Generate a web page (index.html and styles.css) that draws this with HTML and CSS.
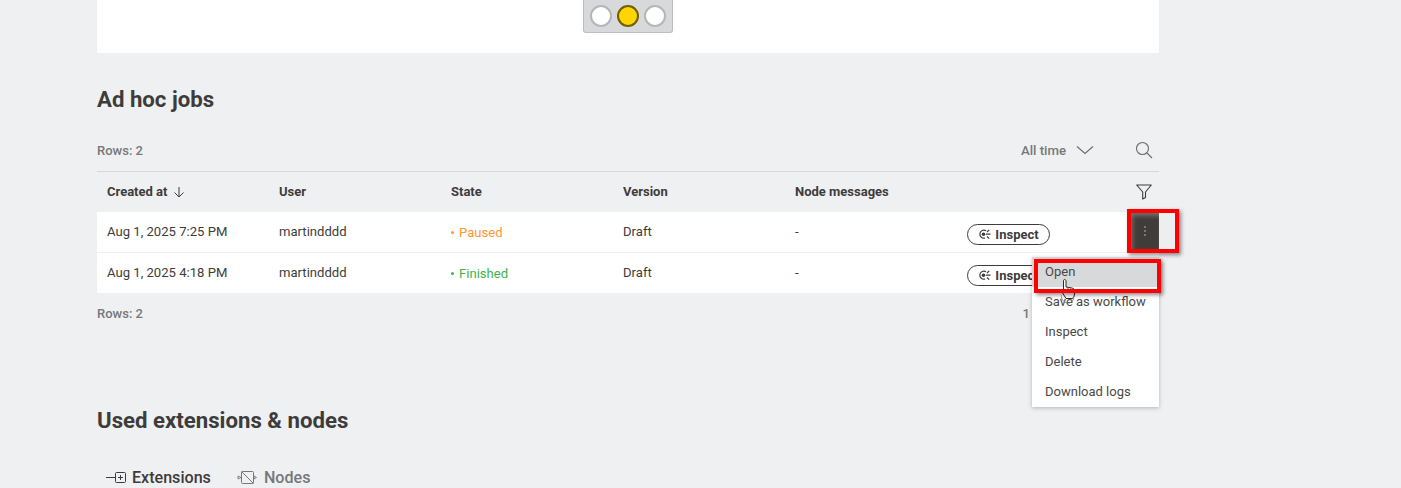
FILE: index.html
```html
<!DOCTYPE html>
<html lang="en">
<head>
<meta charset="utf-8">
<title>Ad hoc jobs</title>
<link rel="stylesheet" href="styles.css">
</head>
<body>
<main class="page">
  <section class="top-card">
    <div class="traffic">
      <span class="light"></span>
      <span class="light on"></span>
      <span class="light"></span>
    </div>
  </section>

  <h2 class="title jobs-title">Ad hoc jobs</h2>

  <div class="toolbar">
    <span class="rows">Rows: 2</span>
    <div class="tools">
      <span class="range">All time</span>
      <svg class="chev" width="18" height="10" viewBox="0 0 18 10"><path d="M1 1.500 9 8.500l8-7" fill="none" stroke="#6a6c6e" stroke-width="1.100"/></svg>
      <svg class="search" width="18" height="18" viewBox="0 0 18 18"><circle cx="7.500" cy="7.500" r="6" fill="none" stroke="#6a6c6e" stroke-width="1.100"/><path d="m12 12 5 5" stroke="#6a6c6e" stroke-width="1.100"/></svg>
    </div>
  </div>

  <div class="table">
    <div class="row head">
      <div class="cell">Created at
        <svg class="sort" width="12" height="12" viewBox="0 0 12 12"><path d="M6 1v10M1.500 6.500 6 11l4.500-4.500" fill="none" stroke="#3e3c3b" stroke-width="1"/></svg>
      </div>
      <div class="cell">User</div>
      <div class="cell">State</div>
      <div class="cell">Version</div>
      <div class="cell">Node messages</div>
      <div class="cell"></div>
      <div class="cell-end">
        <svg width="16" height="16" viewBox="0 0 16 16"><path d="M.7 1h14.600L9.500 8v5.500l-2.800 1.500V8z" fill="none" stroke="#3e3c3b" stroke-width="1.100" stroke-linejoin="round"/></svg>
      </div>
    </div>
    <div class="row body">
      <div class="cell">Aug 1, 2025 7:25 PM</div>
      <div class="cell">martindddd</div>
      <div class="cell state paused"><i class="dot"></i>Paused</div>
      <div class="cell">Draft</div>
      <div class="cell">-</div>
      <div class="cell"><button class="inspect">
        <svg width="13" height="13" viewBox="0 0 13 13"><path d="M8 2.800A4 4 0 1 0 7 10M8 6.200h4.500M9 4l2.200-2.200M9 8.500l2.200 2.200" fill="none" stroke="#3e3c3b" stroke-width="1.200"/><circle cx="5.500" cy="6.200" r="1.800" fill="#3e3c3b"/></svg>
        Inspect</button></div>
      <div class="cell-end"><span class="kebab"><i></i><i></i><i></i></span></div>
    </div>
    <div class="row body">
      <div class="cell">Aug 1, 2025 4:18 PM</div>
      <div class="cell">martindddd</div>
      <div class="cell state finished"><i class="dot"></i>Finished</div>
      <div class="cell">Draft</div>
      <div class="cell">-</div>
      <div class="cell"><button class="inspect">
        <svg width="13" height="13" viewBox="0 0 13 13"><path d="M8 2.800A4 4 0 1 0 7 10M8 6.200h4.500M9 4l2.200-2.200M9 8.500l2.200 2.200" fill="none" stroke="#3e3c3b" stroke-width="1.200"/><circle cx="5.500" cy="6.200" r="1.800" fill="#3e3c3b"/></svg>
        Inspect</button></div>
      <div class="cell-end"></div>
    </div>
  </div>

  <div class="footer">
    <span class="rows">Rows: 2</span>
    <span class="rows">1</span>
  </div>

  <h2 class="title used-title">Used extensions &amp; nodes</h2>

  <nav class="tabs">
    <span class="tab active">
      <svg class="tab-icon" width="20" height="13" viewBox="0 0 20 13"><path d="M0 6.500h9.500" stroke="#3e3c3b" fill="none"/><rect x="9.500" y="1.500" width="10" height="10" rx="1" fill="none" stroke="#3e3c3b"/><path d="M12 6.500h5M14.500 4v5" stroke="#3e3c3b"/></svg>
      Extensions
    </span>
    <span class="tab second">
      <svg class="tab-icon" width="20" height="15" viewBox="0 0 20 15"><rect x="4.500" y="1.500" width="12" height="12" rx="1" fill="none" stroke="#75787a"/><path d="M4.500 1.500 16.500 13.500" stroke="#75787a" fill="none"/><path d="M1 6v3l3-1.500zM17 6v3l2.500-1.500z" fill="none" stroke="#75787a" stroke-width=".9"/></svg>
      Nodes
    </span>
  </nav>
</main>

<div class="menu">
  <div class="menu-item selected">Open</div>
  <div class="menu-item">Save as workflow</div>
  <div class="menu-item">Inspect</div>
  <div class="menu-item">Delete</div>
  <div class="menu-item">Download logs</div>
</div>
<svg class="cursor" width="16" height="26" viewBox="0 0 16 26"><path d="M3.500 1.500c1 0 1.500.6 1.500 1.500v6l6 1c1.500.4 2.500 1 2.500 2.500V16c0 2-1 3-2 4.500H5L1 14c-.6-1 .4-2 1.500-1.200L2.500 3c0-1 .3-1.500 1-1.500z" fill="#fff" stroke="#2b2a29" stroke-width="1"/><path d="M7 10v4M9.500 10.500V14M12 11v3" stroke="#2b2a29" stroke-width=".8"/><path d="M0 17c0 4 3 8 7 8s6-3 6-8" fill="none" stroke="#77787a" stroke-width=".9"/></svg>
<div class="mark mark-kebab"></div>
<div class="mark mark-open"></div>
</body>
</html>
```

FILE: styles.css
```css
* { box-sizing: border-box; }

html, body {
  margin: 0;
  height: 488px;
  overflow: hidden;
}

body {
  position: relative;
  background: #eff0f2;
  color: #3e3c3b;
  font-family: Roboto, "Liberation Sans", sans-serif;
  font-size: 13px;
}

.page {
  width: 1062px;
  margin-left: 97px;
}

.top-card {
  height: 53px;
  background: #fff;
  display: flex;
  justify-content: center;
  align-items: flex-start;
}

.traffic {
  width: 90px;
  height: 33px;
  display: flex;
  align-items: center;
  justify-content: center;
  gap: 5px;
  background: #d7d9da;
  border: 1px solid #bdbfc0;
  border-top: 0;
  border-radius: 0 0 3px 3px;
}

.light {
  width: 22px;
  height: 22px;
  border-radius: 50%;
  background: #fff;
  border: 2px solid #b5b6b6;
}

.light.on {
  background: #ffd500;
  border: 2.500px solid #6f5f00;
}

.title {
  margin: 0;
  font-size: 22.200px;
  line-height: 26px;
  font-weight: 700;
  color: #3e3c3b;
}

.jobs-title { padding-top: 33px; }

.toolbar {
  height: 38px;
  margin-top: 21px;
  padding-bottom: 4px;
  display: flex;
  justify-content: space-between;
  align-items: center;
}

.rows {
  font-size: 13px;
  font-weight: 500;
  color: #75787a;
}

.tools {
  display: flex;
  align-items: center;
}

.range {
  font-size: 13.200px;
  font-weight: 500;
  color: #75787a;
}

.chev { margin-left: 10px; }
.search { margin-left: 41px; margin-right: 6px; }

.table {
  border-top: 1px solid #d6d8da;
}

.row {
  display: grid;
  grid-template-columns: repeat(6, 172px) 30px;
  padding-left: 10px;
  align-items: center;
}

.row.head {
  height: 40px;
  padding-bottom: 2px;
  font-weight: 700;
}

.row.body {
  height: 41px;
  background: #fff;
  border-bottom: 1px solid #eff0f2;
  font-size: 13.100px;
}

.row.body:last-child { border-bottom: 0; height: 40px; }

.row.body .cell { padding-bottom: 2px; }
.row.body .cell.state { padding-bottom: 0; }

.cell {
  white-space: nowrap;
  display: flex;
  align-items: center;
}

.sort { margin-left: 6px; margin-top: 2px; }

.cell-end {
  display: flex;
  justify-content: center;
  width: 20px;
  margin-left: -5px;
}

.row.head .cell-end { margin-top: 2px; }

.state { font-weight: 400; }
.paused { color: #ff9632; }
.finished { color: #3cb44b; }

.dot {
  display: inline-block;
  width: 3px;
  height: 3px;
  border-radius: 50%;
  margin-right: 5px;
  background: currentColor;
}

.inspect {
  height: 21px;
  width: 83px;
  padding: 0;
  margin-top: 6px;
  display: flex;
  align-items: center;
  justify-content: center;
  gap: 4px;
  background: #fff;
  border: 1px solid #3e3c3b;
  border-radius: 11px;
  font: 700 13px Roboto, "Liberation Sans", sans-serif;
  color: #3e3c3b;
}

.kebab {
  position: absolute;
  left: 1131px;
  top: 213px;
  width: 44px;
  height: 36px;
  padding-right: 16px;
  display: flex;
  flex-direction: column;
  align-items: center;
  justify-content: center;
  gap: 2px;
  background: linear-gradient(90deg, #403c3a 0 28px, #eceef0 28px);
}

.kebab::before {
  content: "";
  position: absolute;
  left: 0;
  top: 0;
  width: 28px;
  height: 36px;
  box-shadow: inset 2px 3px 4px rgba(255, 255, 255, .25);
}

.kebab i {
  display: block;
  width: 2px;
  height: 2px;
  background: #75787a;
}

.footer {
  height: 40px;
  display: flex;
  justify-content: space-between;
  align-items: center;
  padding-right: 129px;
}

.used-title { padding-top: 74px; }

.tabs {
  display: flex;
  gap: 26px;
  padding: 35px 0 0 9px;
}

.tab {
  display: flex;
  align-items: center;
  gap: 6px;
  font-size: 16.100px;
  font-weight: 500;
  color: #75787a;
}

.tab.second { gap: 7px; }

.tab-icon { flex: none; }

.tab.active { color: #3e3c3b; }

.menu {
  position: absolute;
  left: 1032px;
  top: 257px;
  width: 127px;
  height: 150px;
  background: #fff;
  box-shadow: 0 1px 4px rgba(0, 0, 0, .25);
}

.menu-item {
  height: 30px;
  line-height: 30px;
  padding-left: 13px;
  color: #4a4846;
}

.menu-item.selected { background: #d8d9db; }

.mark {
  position: absolute;
  border: 4px solid #f00;
  box-shadow: 2px 2px 4px rgba(0, 0, 0, .45);
}

.mark-kebab { left: 1127px; top: 209px; width: 52px; height: 44px; }
.mark-open { left: 1034px; top: 259px; width: 127px; height: 34px; }

.cursor { position: absolute; left: 1061px; top: 278px; }
```
